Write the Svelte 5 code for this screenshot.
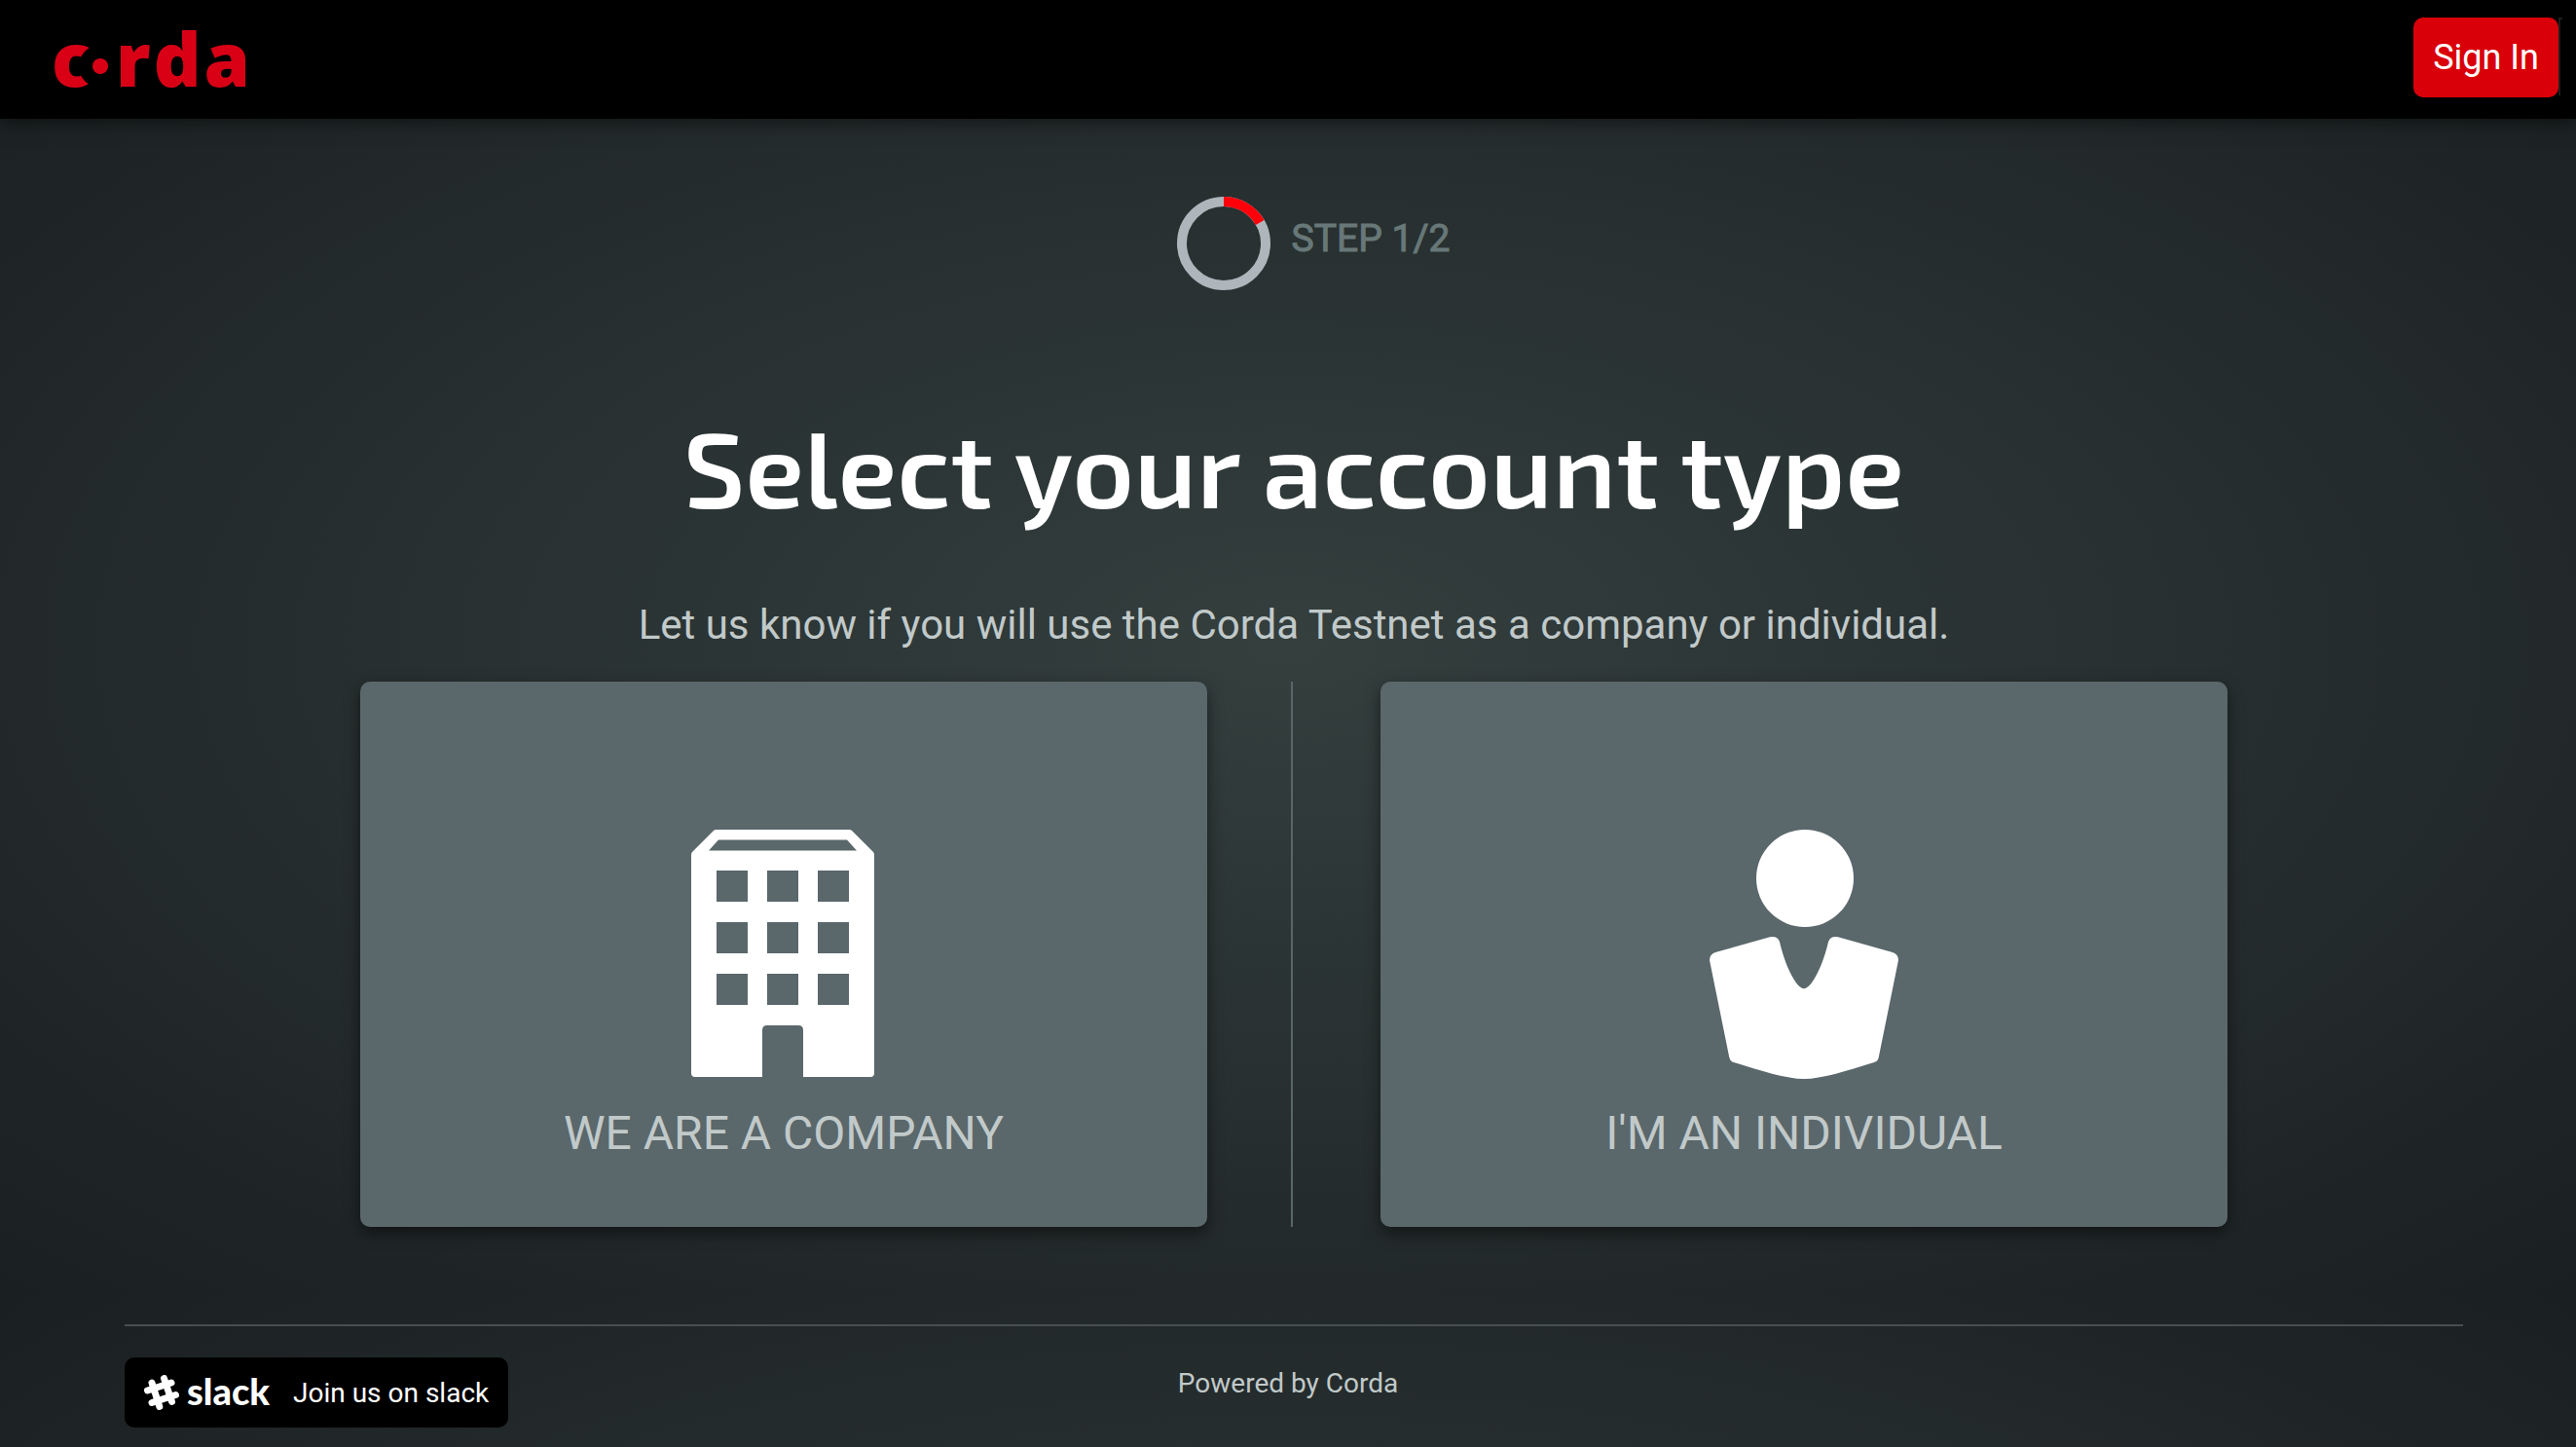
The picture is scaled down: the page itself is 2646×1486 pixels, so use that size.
<script>
  const windows = [42, 95, 148].flatMap((y) => [26, 78, 130].map((x) => ({ x, y })));
</script>

<div class="page">
  <header>
    <a class="brand" href="/" aria-label="Corda home">
      <svg width="240" height="122" viewBox="0 0 240 122" aria-hidden="true">
        <text class="mark" x="7" y="89">c</text>
        <circle class="bite" cx="57" cy="68" r="22" />
        <circle class="dot" cx="57" cy="68" r="8" />
        <text class="mark" x="73" y="89">r<tspan dx="3">d</tspan><tspan dx="3">a</tspan></text>
      </svg>
    </a>
    <div class="account">
      <button class="signin" type="button">Sign In</button>
      <span class="edge"></span>
    </div>
  </header>

  <main>
    <div class="progress">
      <svg width="96" height="96" viewBox="0 0 96 96" aria-hidden="true">
        <circle class="track" cx="48" cy="48" r="43" />
        <path class="done" d="M48 5A43 43 0 0 1 85.2 26.5" />
      </svg>
      <span class="step">STEP 1/2</span>
    </div>

    <h1>Select your account type</h1>
    <p class="lead">Let us know if you will use the Corda Testnet as a company or individual.</p>

    <div class="choices">
      <button class="card" type="button">
        <svg width="190" height="256" viewBox="0 0 190 256" aria-hidden="true">
          <path
            fill="#fff"
            fill-rule="evenodd"
            d="M26 0H162Q164 0 165 1L187 23Q188 24 188 26V250Q188 254 184 254H115V206Q115 201 110 201H78Q73 201 73 206V254H4Q0 254 0 250V26Q0 24 1 23L23 1Q24 0 26 0ZM28 10.500L18 21.500H170L160 10.500Z"
          />
          {#each windows as w}
            <rect class="pane" x={w.x} y={w.y} width="32" height="32" />
          {/each}
        </svg>
        <span>WE ARE A COMPANY</span>
      </button>
      <div class="divider"></div>
      <button class="card" type="button">
        <svg width="194" height="256" viewBox="0 0 194 256" aria-hidden="true">
          <circle cx="98" cy="50" r="50" fill="#fff" />
          <path
            fill="#fff"
            d="M62 110.300Q70 109 72 115.300C77 138 89 163.300 97 163.300C105 163.300 117 138 122 115.300Q124 109 132 110.300L188 126Q194 128 194 134L173.700 234Q173 238 169 239C140 248 115 256 97 256C79 256 54 248 25 239Q21 238 20.300 234L0 134Q0 128 6 126Z"
          />
        </svg>
        <span>I'M AN INDIVIDUAL</span>
      </button>
    </div>
  </main>

  <footer>
    <a class="slack" href="/slack">
      <svg width="36" height="36" viewBox="0 0 36 36" aria-hidden="true">
        <path class="hash" d="M8 8L15.800 32.500M20.500 3.500L28.500 27.500M3.500 16L28 8M8 28.500L32.500 20.500" />
      </svg>
      <span class="slackmark">slack</span>
      <span class="join">Join us on slack</span>
    </a>
    <span class="powered">Powered by Corda</span>
  </footer>
</div>

<style>
  :global(body) {
    margin: 0;
    background: #1b2022;
  }

  .page {
    min-height: 100vh;
    box-sizing: border-box;
    font-family: Roboto, 'Liberation Sans', sans-serif;
    color: #c1c9c9;
    background: radial-gradient(#343f3e, #1a1f21) 0 0 / 100% 1328px;
  }

  button {
    border: 0;
    font-family: inherit;
    cursor: pointer;
  }

  header {
    display: flex;
    align-items: center;
    justify-content: space-between;
    height: 122px;
    padding: 0 14px 0 46px;
    box-sizing: border-box;
    background: #000;
    box-shadow: 0 4px 16px rgba(0, 0, 0, 0.5);
  }

  .brand svg {
    display: block;
  }

  .mark {
    font-family: 'Open Sans', 'Noto Sans', sans-serif;
    font-weight: 800;
    font-size: 76px;
    fill: #d90016;
  }

  .dot {
    fill: #d90016;
  }

  .bite {
    fill: #000;
  }

  .account {
    display: flex;
    padding-bottom: 4px;
  }

  .signin {
    height: 82px;
    padding: 0 20px;
    border-radius: 10px;
    background: #d9000a;
    color: #fff;
    font-size: 36px;
  }

  .edge {
    width: 2px;
    height: 78px;
    border-top: 2px solid #1e1e1e;
    border-left: 2px solid #1e1e1e;
  }

  main {
    padding: 80px 116px 0 128px;
  }

  .progress {
    display: flex;
    justify-content: center;
    gap: 22px;
    padding-left: 40px;
  }

  .track,
  .done {
    fill: none;
    stroke: #aeb6bc;
    stroke-width: 10;
  }

  .done {
    stroke: #ff000a;
  }

  .step {
    color: #687878;
    font-size: 39px;
    line-height: 86px;
    -webkit-text-stroke: 1px #687878;
  }

  h1 {
    margin: 110px 0 0;
    color: #fff;
    font-family: 'Exo 2', Roboto, sans-serif;
    font-size: 110px;
    font-weight: 600;
    line-height: 140px;
    text-align: center;
  }

  .lead {
    margin: 68px 0 0;
    font-size: 42px;
    line-height: 52px;
    text-align: center;
  }

  .choices {
    display: grid;
    grid-template-columns: 1fr 178px 1fr;
    margin: 32px 242px 0;
  }

  .card {
    display: flex;
    flex-direction: column;
    align-items: center;
    justify-content: flex-end;
    gap: 28px;
    height: 560px;
    padding: 0 0 68px;
    border-radius: 10px;
    background: #5a676b;
    box-shadow: 0 6px 16px rgba(0, 0, 0, 0.5);
    color: #c1c9c9;
    font-size: 48px;
    line-height: 56px;
  }

  .pane {
    fill: #5a676b;
  }

  .divider {
    width: 2px;
    margin-left: 86px;
    background: #5a6666;
  }

  footer {
    display: grid;
    grid-template-columns: 1fr auto 1fr;
    align-items: start;
    margin: 100px 116px 0 128px;
    padding: 32px 0 20px;
    border-top: 2px solid #484f50;
  }

  .slack {
    display: flex;
    align-items: center;
    justify-self: start;
    height: 72px;
    padding: 0 20px;
    border-radius: 10px;
    background: #000;
    color: #fff;
    text-decoration: none;
  }

  .slackmark {
    margin: 0 24px 4px 8px;
    font-family: Lato, sans-serif;
    font-size: 38px;
    font-weight: 900;
    line-height: 48px;
  }

  .join {
    font-size: 28px;
  }

  .powered {
    padding: 10px 12px 0 0;
    font-size: 28px;
    line-height: 34px;
  }

  .hash {
    fill: none;
    stroke: #fff;
    stroke-width: 7;
    stroke-linecap: round;
  }
</style>
